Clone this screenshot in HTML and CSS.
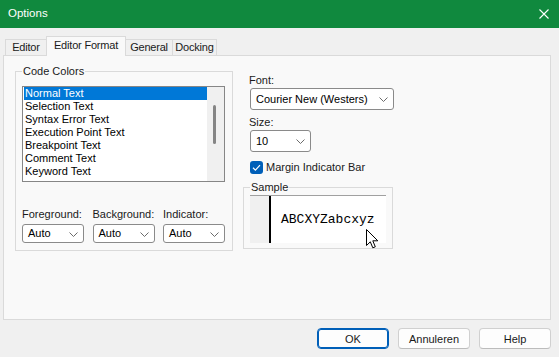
FILE: index.html
```html
<!DOCTYPE html>
<html lang="en">
<head>
  <meta charset="UTF-8" />
  <title>Options</title>
  <link rel="stylesheet" href="styles.css">
</head>
<body>
  <div class="window">
    <div class="titlebar">
      <span class="title">Options</span>
      <svg class="close" width="10" height="10" viewBox="0 0 10 10">
        <path d="M0.5 0.5 L9.5 9.5 M9.5 0.5 L0.5 9.5" stroke="#fff" stroke-width="1.1" fill="none"/>
      </svg>
    </div>

    <div class="tabs">
      <div class="tab tab-editor">Editor</div>
      <div class="tab tab-format active">Editor Format</div>
      <div class="tab tab-general">General</div>
      <div class="tab tab-docking">Docking</div>
    </div>

    <div class="panel">
      <fieldset class="group code-colors">
        <legend>Code Colors</legend>
        <div class="listbox">
          <ul class="items">
            <li class="selected">Normal Text</li>
            <li>Selection Text</li>
            <li>Syntax Error Text</li>
            <li>Execution Point Text</li>
            <li>Breakpoint Text</li>
            <li>Comment Text</li>
            <li>Keyword Text</li>
          </ul>
          <div class="scrollbar"><div class="thumb"></div></div>
        </div>
        <div class="pickers">
          <div class="picker">
            <label>Foreground:</label>
            <div class="select">Auto
              <svg class="chevron" width="9" height="5" viewBox="0 0 9 5"><path d="M0.5 0.5 L4.5 4.5 L8.5 0.5" stroke="#6b6b6b" fill="none"/></svg>
            </div>
          </div>
          <div class="picker">
            <label>Background:</label>
            <div class="select">Auto
              <svg class="chevron" width="9" height="5" viewBox="0 0 9 5"><path d="M0.5 0.5 L4.5 4.5 L8.5 0.5" stroke="#6b6b6b" fill="none"/></svg>
            </div>
          </div>
          <div class="picker">
            <label>Indicator:</label>
            <div class="select">Auto
              <svg class="chevron" width="9" height="5" viewBox="0 0 9 5"><path d="M0.5 0.5 L4.5 4.5 L8.5 0.5" stroke="#6b6b6b" fill="none"/></svg>
            </div>
          </div>
        </div>
      </fieldset>

      <div class="font-column">
        <label class="field-label">Font:</label>
        <div class="select tall font-select">Courier New (Westers)
          <svg class="chevron" width="9" height="5" viewBox="0 0 9 5"><path d="M0.5 0.5 L4.5 4.5 L8.5 0.5" stroke="#6b6b6b" fill="none"/></svg>
        </div>
        <label class="field-label size-label">Size:</label>
        <div class="select tall size-select">10
          <svg class="chevron" width="9" height="5" viewBox="0 0 9 5"><path d="M0.5 0.5 L4.5 4.5 L8.5 0.5" stroke="#6b6b6b" fill="none"/></svg>
        </div>
        <div class="check-row">
          <span class="checkbox">
            <svg width="13" height="13" viewBox="0 0 13 13"><path d="M3 6.8 L5.4 9.1 L10 4.2" stroke="#fff" stroke-width="1.2" fill="none"/></svg>
          </span>
          Margin Indicator Bar
        </div>
        <fieldset class="group sample">
          <legend>Sample</legend>
          <div class="sample-box">
            <div class="gutter"></div>
            <div class="sample-text">ABCXYZabcxyz</div>
            <svg class="cursor" width="13" height="20" viewBox="0 0 13 20">
              <path d="M0.5 0.5 L0.5 16.5 L4.3 12.8 L6.8 18.8 L9.3 17.8 L6.8 11.8 L11.8 11.8 Z" fill="#fff" stroke="#000" stroke-width="1" stroke-linejoin="miter"/>
            </svg>
          </div>
        </fieldset>
      </div>
    </div>

    <div class="buttons">
      <button class="btn default">OK</button>
      <button class="btn">Annuleren</button>
      <button class="btn">Help</button>
    </div>
  </div>
</body>
</html>
```

FILE: styles.css
```css
:root {
  --title: #10893e;
  --bg: #f0f0f0;
  --panel: #f9f9f9;
  --line: #dadada;
  --text: #1a1a1a;
  --accent: #005fb8;
  --select: #0078d7;
}

* {
  box-sizing: border-box;
  margin: 0;
  padding: 0;
}

body {
  background: var(--bg);
  font-family: 'Liberation Sans', Arial, sans-serif;
  font-size: 11px;
  color: var(--text);
}

.window {
  width: 559px;
  height: 357px;
  background: var(--bg);
  overflow: hidden;
}

.titlebar {
  height: 28px;
  background: var(--title);
  color: #fff;
  display: flex;
  align-items: center;
  justify-content: space-between;
  padding: 0 10px 3px 8px;
}

.title {
  font-size: 11.5px;
}

.close {
  margin-top: 2px;
}

/* tabs */

.tabs {
  display: flex;
  align-items: flex-end;
  height: 19px;
  margin-top: 8px;
  padding-left: 5px;
}

.tab {
  height: 16px;
  line-height: 14px;
  text-align: center;
  letter-spacing: -0.2px;
  border: 1px solid var(--line);
  border-bottom: none;
  margin-right: -1px;
  background: var(--bg);
  white-space: nowrap;
}

.tab-editor { width: 42px; }
.tab-format { width: 80px; }
.tab-general { width: 48px; }
.tab-docking { width: 45px; }

.tab.active {
  height: 20px;
  padding-top: 1px;
  margin-bottom: -1px;
  background: var(--panel);
  position: relative;
  z-index: 1;
}

/* panel */

.panel {
  margin: 0 8px 0 3px;
  height: 265px;
  background: var(--panel);
  border: 1px solid var(--line);
  display: flex;
  align-items: flex-start;
  gap: 10px;
  padding: 8px 0 0 11px;
}

.group {
  border: 1px solid var(--line);
  padding: 8px 6px 7px;
  min-width: 0;
}

.group legend {
  padding: 0 1px;
  line-height: 14px;
}

.code-colors {
  width: 218px;
  padding-right: 7px;
}

.listbox {
  height: 96px;
  border: 1px solid #868686;
  background: #fff;
  display: flex;
  padding: 0 0 0 1px;
}

.items {
  list-style: none;
  flex: 1;
  color: #000;
}

.items li {
  height: 13px;
  line-height: 13px;
  padding-left: 1px;
}

.items li.selected {
  background: var(--select);
  color: #fff;
}

.scrollbar {
  width: 17px;
  background: var(--bg);
  padding-top: 18px;
}

.thumb {
  width: 3px;
  height: 39px;
  margin-left: 6px;
  border-radius: 2px;
  background: #858585;
}

.pickers {
  display: grid;
  grid-template-columns: repeat(3, 62px);
  justify-content: space-between;
  margin-top: 25px;
}

.picker label {
  display: block;
  line-height: 14px;
  margin-bottom: 3px;
  white-space: nowrap;
}

.select {
  position: relative;
  height: 19px;
  line-height: 17px;
  padding-left: 5px;
  background: #fff;
  border: 1px solid #8a8a8a;
  border-radius: 3px;
  color: #000;
}

.select.tall {
  height: 22px;
  line-height: 20px;
}

.chevron {
  position: absolute;
  right: 5px;
  top: 7px;
}

.select.tall .chevron {
  top: 8px;
}

/* right column */

.font-column {
  width: 150px;
  margin-top: 9px;
  display: flex;
  flex-direction: column;
}

.field-label {
  line-height: 14px;
  padding-left: 6px;
  margin-bottom: 1px;
}

.size-label {
  margin-top: 5px;
}

.font-select {
  margin-left: 7px;
  width: 144px;
}

.size-select {
  margin-left: 7px;
  width: 61px;
}

.check-row {
  display: flex;
  align-items: center;
  gap: 3px;
  height: 14px;
  margin: 8px 0 0 7px;
}

.checkbox {
  width: 13px;
  height: 13px;
  border-radius: 3px;
  background: var(--accent);
  display: flex;
}

.sample {
  margin-top: 6px;
  padding: 1px 6px 5px;
}

.sample legend {
  padding: 0 1px;
}

.sample-box {
  position: relative;
  height: 48px;
  background: #fff;
  border-top: 1px solid #a0a0a0;
  display: flex;
  align-items: center;
}

.gutter {
  width: 21px;
  height: 100%;
  background: var(--bg);
  border-right: 2px solid #000;
}

.sample-text {
  font-family: 'Liberation Mono', 'Courier New', monospace;
  font-size: 13px;
  color: #000;
  padding-left: 10px;
  margin-top: -1px;
}

.cursor {
  position: absolute;
  left: 116px;
  top: 33px;
}

/* buttons */

.buttons {
  display: flex;
  justify-content: flex-end;
  gap: 9px;
  margin: 8px 8px 0 0;
}

.btn {
  width: 72px;
  height: 21px;
  font-family: 'Liberation Sans', Arial, sans-serif;
  font-size: 11px;
  color: var(--text);
  background: #fdfdfd;
  border: 1px solid #d0d0d0;
  border-bottom-color: #bcbcbc;
  border-radius: 4px;
}

.btn.default {
  border: 1px solid var(--accent);
  box-shadow: inset 0 0 0 1px var(--accent);
}
```
